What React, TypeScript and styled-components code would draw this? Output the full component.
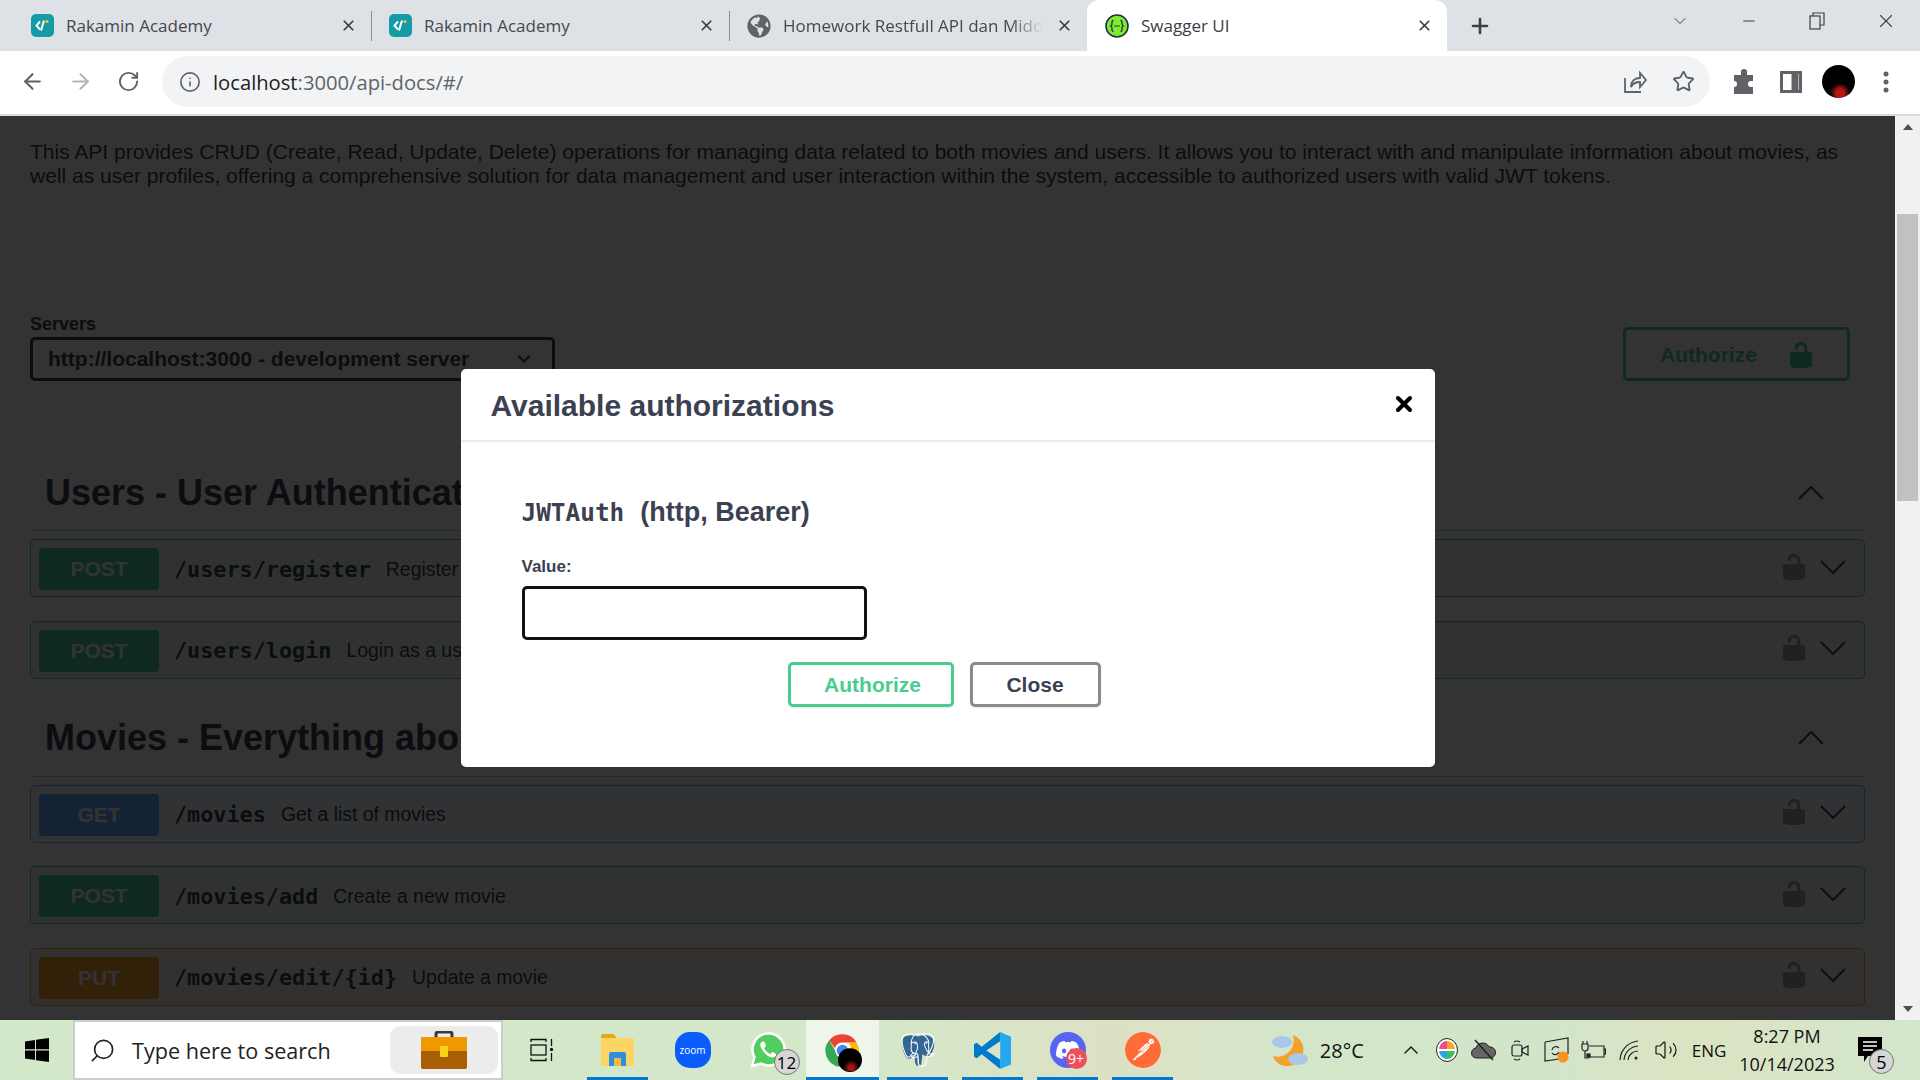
import styled, { createGlobalStyle } from "styled-components";
import { ArrowLeft, ArrowRight, RotateCw, Info, Star, X, Plus, ChevronDown, ChevronUp, Minus, Search, Volume2 } from "lucide-react";
import { FaGlobeAmericas, FaDiscord } from "react-icons/fa";
import { SiPostgresql, SiPostman } from "react-icons/si";

type Method = "post" | "get" | "put";

type Operation = {
  method: Method;
  path: string;
  summary: string;
};

const methodColors: Record<Method, { main: string; soft: string }> = {
  post: { main: "#49cc90", soft: "rgba(73,204,144,.1)" },
  get: { main: "#61affe", soft: "rgba(97,175,254,.1)" },
  put: { main: "#fca130", soft: "rgba(252,161,48,.1)" },
};

const userOps: Operation[] = [
  { method: "post", path: "/users/register", summary: "Register a new user" },
  { method: "post", path: "/users/login", summary: "Login as a user" },
];

const movieOps: Operation[] = [
  { method: "get", path: "/movies", summary: "Get a list of movies" },
  { method: "post", path: "/movies/add", summary: "Create a new movie" },
  { method: "put", path: "/movies/edit/{id}", summary: "Update a movie" },
];

const GlobalStyle = createGlobalStyle`
  html, body {
    margin: 0;
    height: 100%;
    overflow: hidden;
  }
  * {
    box-sizing: border-box;
  }
`;

const Screen = styled.div`
  width: 1920px;
  height: 1080px;
  display: flex;
  flex-direction: column;
  font-family: "Liberation Sans", Arial, sans-serif;
  background: #fff;
`;

/* browser chrome */
const TabStrip = styled.div`
  height: 51px;
  flex: none;
  display: flex;
  align-items: stretch;
  padding-left: 14px;
  background: #dee1e6;
  font-family: "Open Sans", "Noto Sans", sans-serif;
`;

const Tab = styled.div<{ $w: number; $active?: boolean }>`
  position: relative;
  width: ${({ $w }) => $w}px;
  display: flex;
  align-items: center;
  gap: 12px;
  padding: 0 13px 0 ${({ $active }) => ($active ? 18 : 17)}px;
  color: ${({ $active }) => ($active ? "#3c4043" : "#45484d")};
  background: ${({ $active }) => ($active ? "#fff" : "transparent")};
  border-radius: ${({ $active }) => ($active ? "12px 12px 0 0" : "0")};
`;

const TabTitle = styled.span<{ $fade?: boolean }>`
  flex: 1;
  min-width: 0;
  font-size: 17px;
  white-space: nowrap;
  overflow: hidden;
  mask-image: ${({ $fade }) => ($fade ? "linear-gradient(90deg, #000 88%, transparent 100%)" : "none")};
`;

const TabClose = styled.span`
  width: 20px;
  display: flex;
  justify-content: center;
  color: #3c4043;
`;

const TabDivider = styled.div`
  width: 1px;
  height: 30px;
  align-self: center;
  background: #888b90;
`;

const NewTab = styled.div`
  width: 44px;
  margin-left: 11px;
  display: flex;
  align-items: center;
  justify-content: center;
  color: #3c4043;
`;

const WindowControls = styled.div`
  margin-left: auto;
  display: flex;
`;

const WindowButton = styled.div`
  width: 68.5px;
  height: 42px;
  display: flex;
  align-items: center;
  justify-content: center;
  color: #3c4043;
`;

const Favicon = styled.span<{ $bg: string }>`
  width: 23px;
  height: 23px;
  flex: none;
  border-radius: 5px;
  background: ${({ $bg }) => $bg};
  display: flex;
  align-items: center;
  justify-content: center;
  color: #fff;
`;

const Toolbar = styled.div`
  height: 65px;
  flex: none;
  display: flex;
  align-items: center;
  padding: 0 10px 2px 8px;
  background: #fff;
  border-bottom: 2px solid #dcdcdc;
`;

const ToolButton = styled.div<{ $w?: number; $dim?: boolean }>`
  width: ${({ $w }) => $w ?? 48}px;
  flex: none;
  display: flex;
  align-items: center;
  justify-content: center;
  color: ${({ $dim }) => ($dim ? "#b3b5b8" : "#5f6368")};
`;

const Omnibox = styled.div`
  flex: 1;
  height: 51px;
  margin: 0 10px;
  padding: 0 3px 0 17px;
  display: flex;
  align-items: center;
  gap: 12px;
  border-radius: 26px;
  background: #f1f3f4;
`;

const OmniActions = styled.div`
  display: flex;
`;

const Url = styled.div`
  flex: 1;
  font-family: "Open Sans", "Noto Sans", sans-serif;
  font-size: 20.2px;
  color: #5f6368;
  b {
    font-weight: 400;
    color: #202124;
  }
`;

const Avatar = styled.div`
  width: 33px;
  height: 33px;
  border-radius: 50%;
  background: radial-gradient(circle at 55% 85%, #b01818 0 12%, #000 30%);
`;

/* swagger page */
const Viewport = styled.div`
  flex: 1;
  min-height: 0;
  display: flex;
`;

const Main = styled.div`
  position: relative;
  flex: 1;
  min-width: 0;
  overflow: hidden;
  background: #fff;
  color: #3b4151;
`;

const Intro = styled.p`
  margin: 0;
  height: 198px;
  padding: 24px 30px 0;
  font-size: 21px;
  line-height: 24px;
`;

const SchemeBar = styled.div`
  height: 113px;
  padding: 0 45px 45px 30px;
  display: flex;
  justify-content: space-between;
  align-items: flex-end;
  border-bottom: 1px solid #e8e8e8;
`;

const ServerLabel = styled.div`
  font-size: 18px;
  font-weight: 700;
  line-height: 20px;
  margin-bottom: 3px;
`;

const ServerSelect = styled.div`
  width: 525px;
  height: 44px;
  padding: 0 18px 0 15px;
  display: flex;
  align-items: center;
  justify-content: space-between;
  border: 3px solid #41444e;
  border-radius: 5px;
  font-size: 21px;
  font-weight: 700;
`;

const AuthorizeTop = styled.div`
  width: 227px;
  height: 54px;
  padding: 1px 0 0 34px;
  display: flex;
  align-items: center;
  gap: 33px;
  border: 3px solid #49cc90;
  border-radius: 5px;
  color: #49cc90;
  font-size: 21px;
  font-weight: 700;
`;

const Section = styled.section`
  padding: 0 30px;
`;

const SectionHead = styled.h3<{ $top: number }>`
  margin: ${({ $top }) => $top}px 0 0;
  height: 78px;
  padding: 2px 41px 0 15px;
  display: flex;
  align-items: center;
  justify-content: space-between;
  border-bottom: 1px solid rgba(59,65,81,.3);
  font-size: 36px;
  font-weight: 700;
  white-space: nowrap;
`;

const OperationList = styled.div`
  margin-top: 8px;
  display: flex;
  flex-direction: column;
  gap: 23.5px;
`;

const Row = styled.div<{ $method: Method }>`
  height: 58px;
  padding: 8px 18px 6px 8px;
  display: flex;
  align-items: center;
  border: 1px solid ${({ $method }) => methodColors[$method].main};
  border-radius: 5px;
  background: ${({ $method }) => methodColors[$method].soft};
`;

const Badge = styled.div<{ $method: Method }>`
  width: 120px;
  height: 42px;
  flex: none;
  display: flex;
  align-items: center;
  justify-content: center;
  border-radius: 4px;
  background: ${({ $method }) => methodColors[$method].main};
  color: #fff;
  font-size: 21px;
  font-weight: 700;
`;

const OpPath = styled.span`
  margin-left: 15px;
  font-family: "DejaVu Sans Mono", "Liberation Mono", monospace;
  font-size: 21.8px;
  font-weight: 700;
`;

const OpSummary = styled.span`
  margin-left: 15px;
  font-size: 19.4px;
`;

const RowEnd = styled.div`
  margin: 0 0 5px auto;
  display: flex;
  align-items: center;
  gap: 15px;
`;

const DimLock = styled.span`
  display: flex;
  opacity: .45;
`;

/* modal */
const Backdrop = styled.div`
  position: absolute;
  inset: 0;
  display: flex;
  align-items: center;
  justify-content: center;
  background: rgba(0,0,0,.8);
`;

const Modal = styled.div`
  width: 974px;
  height: 398px;
  background: #fff;
  border-radius: 5px;
  color: #3b4151;
`;

const ModalHeader = styled.div`
  height: 73px;
  padding: 2px 19px 0 30px;
  display: flex;
  align-items: center;
  justify-content: space-between;
  border-bottom: 2px solid #ebebed;
`;

const ModalTitle = styled.h3`
  margin: 0;
  font-size: 30px;
  font-weight: 700;
`;

const ModalClose = styled.span`
  display: flex;
  margin-bottom: 4px;
  color: #000;
`;

const ModalBody = styled.div`
  padding: 56px 60px 0 61px;
`;

const SchemeName = styled.h4`
  margin: 0;
  height: 28px;
  display: flex;
  align-items: center;
  gap: 16px;
  font-size: 27px;
  font-weight: 700;
  code {
    font-family: "DejaVu Sans Mono", "Liberation Mono", monospace;
    font-size: 24.4px;
  }
`;

const ValueLabel = styled.label`
  display: block;
  margin-top: 31px;
  font-size: 17px;
  font-weight: 700;
  line-height: 20px;
`;

const ValueInput = styled.input`
  display: block;
  width: 345px;
  height: 54px;
  margin-top: 9px;
  border: 3px solid #111;
  border-radius: 5px;
  background: #fff;
  outline: none;
`;

const Actions = styled.div`
  margin-top: 22px;
  padding-right: 8px;
  display: flex;
  justify-content: center;
  gap: 16px;
`;

const ModalButton = styled.button<{ $w: number; $color: string; $text: string; $shift?: number }>`
  width: ${({ $w }) => $w}px;
  height: 45px;
  padding: 0 0 0 ${({ $shift }) => $shift ?? 0}px;
  border: 3px solid ${({ $color }) => $color};
  border-radius: 5px;
  background: #fff;
  box-shadow: 0 1px 2px rgba(0,0,0,.1);
  color: ${({ $text }) => $text};
  font-family: inherit;
  font-size: 21px;
  font-weight: 700;
`;

/* scrollbar */
const ScrollBar = styled.div`
  width: 25px;
  flex: none;
  display: flex;
  flex-direction: column;
  align-items: center;
  background: #f1f1f1;
`;

const ScrollArrow = styled.div<{ $down?: boolean }>`
  height: 22px;
  flex: none;
  display: flex;
  align-items: center;
  justify-content: center;
  &::before {
    content: "";
    border-left: 5px solid transparent;
    border-right: 5px solid transparent;
    border-${({ $down }) => ($down ? "top" : "bottom")}: 6px solid #505050;
  }
`;

const ScrollTrack = styled.div`
  flex: 1;
  padding-top: 76px;
`;

const ScrollThumb = styled.div`
  width: 21px;
  height: 287px;
  background: #c1c1c1;
`;

/* taskbar */
const Taskbar = styled.div`
  height: 60px;
  flex: none;
  display: flex;
  align-items: stretch;
  padding-right: 20px;
  background: linear-gradient(90deg, #d3e8c9 0%, #d4e7c9 45%, #dde1c4 58%, #d3e6ca 68%, #d2e5c9 80%, #dbe4c2 88%, #d3e6cb 100%);
  color: #111;
  font-family: "Open Sans", "Noto Sans", sans-serif;
`;

const StartButton = styled.div`
  width: 73px;
  display: flex;
  align-items: center;
  justify-content: center;
`;

const SearchBox = styled.div`
  width: 430px;
  padding: 0 3px 0 14px;
  display: flex;
  align-items: center;
  border: 2px solid #cdcdcd;
  background: #fff;
  font-size: 21.6px;
  color: #222;
`;

const SearchGlyph = styled(Search)`
  transform: scaleX(-1);
`;

const SearchText = styled.span`
  margin-left: 16px;
  flex: 1;
`;

const SearchChip = styled.div`
  width: 108px;
  height: 48px;
  display: flex;
  align-items: center;
  justify-content: center;
  border-radius: 10px;
  background: #ececec;
`;

const TaskSlot = styled.div<{ $w?: number; $open?: boolean; $active?: boolean }>`
  position: relative;
  width: ${({ $w }) => $w ?? 75}px;
  display: flex;
  align-items: center;
  justify-content: center;
  &::before {
    content: "";
    display: ${({ $active }) => ($active ? "block" : "none")};
    position: absolute;
    inset: 0 1px;
    background: rgba(255,255,255,.6);
  }
  &::after {
    content: "";
    display: ${({ $open }) => ($open ? "block" : "none")};
    position: absolute;
    bottom: 0;
    left: ${({ $active }) => ($active ? 1 : 7)}px;
    right: ${({ $active }) => ($active ? 1 : 7)}px;
    height: 3px;
    background: #0078d4;
  }
  > * {
    position: relative;
  }
`;

const CountBadge = styled.span<{ $bg: string; $size: number; $font?: number; $right: number; $bottom: number; $dark?: boolean }>`
  position: absolute;
  right: ${({ $right }) => $right}px;
  bottom: ${({ $bottom }) => $bottom}px;
  width: ${({ $size }) => $size}px;
  height: ${({ $size }) => $size}px;
  display: flex;
  align-items: center;
  justify-content: center;
  border-radius: 50%;
  border: 1px solid ${({ $dark }) => ($dark ? "#777" : "transparent")};
  background: ${({ $bg }) => $bg};
  color: ${({ $dark }) => ($dark ? "#000" : "#fff")};
  font-size: ${({ $font }) => $font ?? 14}px;
  line-height: 1;
`;

const IconWrap = styled.div`
  position: relative;
  display: flex;
`;

const ElephantLines = styled.span`
  position: absolute;
  inset: 0;
  display: flex;
  align-items: center;
  justify-content: center;
  color: #fff;
`;

const ZoomIcon = styled.div`
  width: 36px;
  height: 36px;
  display: flex;
  align-items: center;
  justify-content: center;
  border-radius: 15px;
  background: #0b5cff;
  color: #fff;
  font-size: 10px;
`;

const RoundIcon = styled.div<{ $bg: string }>`
  width: 36px;
  height: 36px;
  display: flex;
  align-items: center;
  justify-content: center;
  border-radius: 50%;
  background: ${({ $bg }) => $bg};
  color: #fff;
`;

const Tray = styled.div`
  margin-left: auto;
  display: flex;
  align-items: center;
`;

const Temperature = styled.span`
  margin-left: 12px;
  margin-right: 29px;
  font-size: 20px;
`;

const TraySlot = styled.div<{ $w?: number }>`
  width: ${({ $w }) => $w ?? 36.4}px;
  display: flex;
  align-items: center;
  justify-content: center;
  font-size: 17px;
`;

const Clock = styled.div`
  width: 106px;
  text-align: center;
  font-size: 18px;
  line-height: 28px;
`;

const Notification = styled.div`
  position: relative;
  width: 60px;
  height: 60px;
  display: flex;
  align-items: center;
  justify-content: center;
`;

function RakaminIcon() {
  return (
    <Favicon $bg="#149ca6">
      <svg width="15" height="15" viewBox="0 0 15 15" fill="none">
        <path d="M5 3.5 1.5 7.5 5 11.5" stroke="#fff" strokeWidth="2" />
        <path d="M9 2.5 6 12.5" stroke="#fff" strokeWidth="2" />
        <circle cx="12" cy="3.5" r="1.6" fill="#f6c344" />
      </svg>
    </Favicon>
  );
}

function SwaggerIcon() {
  return (
    <svg width="24" height="24" viewBox="0 0 24 24">
      <circle cx="12" cy="12" r="11" fill="#85ea2d" stroke="#173647" strokeWidth="1.6" />
      <path d="M8.5 6.5c-2 0-1.500 2-1.500 3.500s-1.300 2-1.300 2 1.300.5 1.300 2-.5 3.500 1.500 3.500M15.500 6.500c2 0 1.500 2 1.500 3.500s1.300 2 1.300 2-1.300.5-1.300 2 .5 3.500-1.500 3.500" fill="none" stroke="#173647" strokeWidth="1.300" />
      <path d="M9.500 12h5" stroke="#173647" strokeWidth="1.500" strokeDasharray="1.300 .6" />
    </svg>
  );
}

function LockIcon({ w, h, color }: { w: number; h: number; color: string }) {
  return (
    <svg width={w} height={h} viewBox="3 1 14 18" preserveAspectRatio="none" fill={color}>
      <path d="M15.800 8H14V5.600C14 2.703 12.665 1 10 1 7.334 1 6 2.703 6 5.600V6h2v-.801C8 3.754 8.797 3 10 3c1.203 0 2 .754 2 2.199V8H4c-.553 0-1 .646-1 1.199V17c0 .549.428 1.139.951 1.307l1.197.387C5.672 18.861 6.550 19 7.100 19h5.800c.549 0 1.428-.139 1.951-.307l1.196-.387c.524-.167.953-.757.953-1.306V9.199C17 8.646 16.352 8 15.800 8z" />
    </svg>
  );
}

function Caret({ up }: { up?: boolean }) {
  return (
    <svg width="26" height="14" viewBox="0 0 26 14" fill="none" stroke="#3b4151" strokeWidth="2">
      <path d={up ? "M1 13 13 1 25 13" : "M1 1 13 13 25 1"} />
    </svg>
  );
}

function OperationRow({ op }: { op: Operation }) {
  return (
    <Row $method={op.method}>
      <Badge $method={op.method}>{op.method.toUpperCase()}</Badge>
      <OpPath>{op.path}</OpPath>
      <OpSummary>{op.summary}</OpSummary>
      <RowEnd>
        <DimLock><LockIcon w={22} h={26} color="#3b4151" /></DimLock>
        <Caret />
      </RowEnd>
    </Row>
  );
}

function ApiSection({ title, top, ops }: { title: string; top: number; ops: Operation[] }) {
  return (
    <Section>
      <SectionHead $top={top}>
        {title}
        <Caret up />
      </SectionHead>
      <OperationList>
        {ops.map((op) => (
          <OperationRow key={op.path} op={op} />
        ))}
      </OperationList>
    </Section>
  );
}

function WindowsLogo() {
  return (
    <svg width="24" height="24" viewBox="0 0 24 24" fill="#000">
      <path d="M0 3.400 10 2v9.300H0zM11 1.800 24 0v11.300H11zM0 12.500h10v9.400L0 20.500zM11 12.500h13V24l-13-1.800z" />
    </svg>
  );
}

function Briefcase() {
  return (
    <svg width="46" height="38" viewBox="0 0 46 38">
      <path d="M15 7V3a2 2 0 0 1 2-2h12a2 2 0 0 1 2 2v4" fill="none" stroke="#3a3a3a" strokeWidth="3" />
      <rect x="0" y="6" width="46" height="32" rx="2" fill="#a85e04" />
      <path d="M0 8a2 2 0 0 1 2-2h42a2 2 0 0 1 2 2v12H0z" fill="#f09800" />
      <rect x="19" y="15" width="8" height="11" rx="1" fill="#fcd116" />
    </svg>
  );
}

function TaskView() {
  return (
    <svg width="24" height="24" viewBox="0 0 24 24" fill="none" stroke="#111" strokeWidth="1.300">
      <path d="M1 4V1.500h15V4M1 20v2.500h15V20" />
      <rect x="1" y="7" width="15" height="10" />
      <path d="M21.500 1v7M21.500 15v8" />
      <circle cx="21.500" cy="11.500" r="1" fill="#111" />
    </svg>
  );
}

function FolderIcon() {
  return (
    <svg width="33" height="32" viewBox="0 0 33 32">
      <path d="M0 2a2 2 0 0 1 2-2h10l4 4h-16z" fill="#e6a817" />
      <rect x="0" y="4" width="33" height="28" rx="2" fill="#fcd462" />
      <path d="M8 32V20a2 2 0 0 1 2-2h13a2 2 0 0 1 2 2v12h-5v-8h-7v8z" fill="#2f8fd8" />
      <rect x="13" y="24" width="7" height="8" fill="#f4b93e" />
    </svg>
  );
}

function ChromeIcon() {
  return (
    <svg width="39" height="39" viewBox="0 0 48 48">
      <path d="M24 4a20 20 0 0 1 17.300 10H24a10 10 0 0 0-9.500 7L7.600 11.500A20 20 0 0 1 24 4z" fill="#ea4335" />
      <path d="M7.600 11.500 16 26a10 10 0 0 0 11 7.500L20 44A20 20 0 0 1 7.600 11.500z" fill="#34a853" />
      <path d="M41.300 14A20 20 0 0 1 20 44l8.500-13A10 10 0 0 0 31 14z" fill="#fbbc04" />
      <circle cx="24" cy="24" r="9" fill="#fff" />
      <circle cx="24" cy="24" r="7" fill="#4285f4" />
    </svg>
  );
}

function WhatsAppIcon() {
  return (
    <svg width="38" height="38" viewBox="0 0 38 38">
      <path d="M3 35 5.500 26A16 16 0 1 1 12 32.500z" fill="#4fce5d" stroke="#fff" strokeWidth="2.500" strokeLinejoin="round" />
      <path d="M13 10.500c-2 1.500-2.500 4 0 8s6 7 9.500 8c2.500.5 4.500-1 5-3 0-.5-3.500-2.500-4-2.500-.8 0-1.500 2-2.200 2-1.500-.3-5.500-3.800-6-5.800 0-.7 1.700-1.500 1.700-2.200 0-.5-1.500-4.500-2-4.500-.6-.2-1.300-.1-2 0z" fill="#fff" />
    </svg>
  );
}

function ElephantIcon() {
  return (
    <IconWrap>
      <svg width="34" height="36" viewBox="0 0 24 24">
        <path d="M5 2C1 2 0 6 1 10c1 5 3 9 5 8 2 0 3-2 3.500-3l.5 6c.5 3 4 3 4.500 0l.5-6c3 2 5 2 6 0 2.500-3 3-8 2-10-2-4-7-4-11-2.500C10 1.500 7 1.500 5 2z" fill="#336791" />
      </svg>
      <ElephantLines><SiPostgresql size={34} /></ElephantLines>
    </IconWrap>
  );
}

function VsCodeIcon() {
  return (
    <svg width="37" height="37" viewBox="0 0 24 24">
      <path d="M17 0 24 3v18l-7 3z" fill="#23a9f2" />
      <path d="M17 0v6L8 12l9 6v6L5 14.500 1.800 17 0 16v-8l1.800-1L5 9.500z" fill="#007acc" />
    </svg>
  );
}

function WeatherIcon() {
  return (
    <svg width="37" height="33" viewBox="0 0 37 33">
      <path d="M22 1a16 16 0 0 1-6 31C9 32 4 28 2 22c12 4 24-8 20-21z" fill="#f2a22c" />
      <ellipse cx="11" cy="8" rx="10" ry="6" fill="#a9c7e8" />
      <ellipse cx="27" cy="25" rx="10" ry="6" fill="#a9c7e8" />
    </svg>
  );
}

function ColorCircle() {
  return (
    <svg width="22" height="24" viewBox="0 0 22 24">
      <ellipse cx="11" cy="12" rx="10.500" ry="11.500" fill="#fff" stroke="#222" />
      <path d="M11 3a8 9 0 0 0-8 8h8z" fill="#ee4d8c" />
      <path d="M11 3a8 9 0 0 1 8 8h-8z" fill="#f7a823" />
      <path d="M3 13a8 9 0 0 0 8 8v-8z" fill="#2aa7e1" />
      <path d="M19 13a8 9 0 0 1-8 8v-8z" fill="#39c15b" />
    </svg>
  );
}

function CloudOff() {
  return (
    <svg width="26" height="22" viewBox="0 0 26 22">
      <path d="M6 19a5 5 0 0 1-1-10 7 7 0 0 1 13-1 5.500 5.500 0 0 1 2 11z" fill="#666" stroke="#222" />
      <path d="M4 1 22 21" stroke="#222" strokeWidth="1.500" />
    </svg>
  );
}

function MeetIcon() {
  return (
    <svg width="18" height="26" viewBox="0 0 18 26" fill="none" stroke="#222" strokeWidth="1.200">
      <rect x="1" y="8" width="10" height="11" rx="2" />
      <path d="m11 12 6-3v9l-6-3zM3 5q3-2 6 0M3 22q3 2 6 0" />
    </svg>
  );
}

function SyncIcon() {
  return (
    <svg width="25" height="26" viewBox="0 0 25 26" fill="none" stroke="#222" strokeWidth="1.200">
      <path d="M1 5 24 1v16M1 5v19l14-2" />
      <path d="M8 13a4 4 0 0 1 7-2M15 15a4 4 0 0 1-7 1" />
      <circle cx="19" cy="20" r="5.500" fill="#f7931e" stroke="none" />
    </svg>
  );
}

function BatteryIcon() {
  return (
    <svg width="25" height="20" viewBox="0 0 25 20" fill="none" stroke="#222" strokeWidth="1.200">
      <path d="M8 6h15v11H8M23 9h1.500v5H23" />
      <path d="M2 4v-3M6 4v-3M1 4h6v4a3 3 0 0 1-6 0zM4 11v7h4" />
      <rect x="6" y="14" width="3" height="3" fill="#222" />
    </svg>
  );
}

function WifiIcon() {
  return (
    <svg width="20" height="22" viewBox="0 0 20 22" fill="none" stroke="#222" strokeWidth="1.200">
      <path d="M1 21A20 20 0 0 1 19 2M5 21A15 15 0 0 1 19 7M9 21a10 10 0 0 1 10-9" />
      <circle cx="17" cy="19" r="1.500" fill="#222" stroke="none" />
    </svg>
  );
}

export default function App() {
  return (
    <Screen>
      <GlobalStyle />
      <TabStrip>
        <Tab $w={357}>
          <RakaminIcon />
          <TabTitle>Rakamin Academy</TabTitle>
          <TabClose><X size={17} strokeWidth={2.4} /></TabClose>
        </Tab>
        <TabDivider />
        <Tab $w={357}>
          <RakaminIcon />
          <TabTitle>Rakamin Academy</TabTitle>
          <TabClose><X size={17} strokeWidth={2.4} /></TabClose>
        </Tab>
        <TabDivider />
        <Tab $w={357}>
          <FaGlobeAmericas size={24} color="#5f6368" />
          <TabTitle $fade>Homework Restfull API dan Middleware</TabTitle>
          <TabClose><X size={17} strokeWidth={2.4} /></TabClose>
        </Tab>
        <Tab $w={360} $active>
          <SwaggerIcon />
          <TabTitle>Swagger UI</TabTitle>
          <TabClose><X size={17} strokeWidth={2.4} /></TabClose>
        </Tab>
        <NewTab><Plus size={24} strokeWidth={2.6} /></NewTab>
        <WindowControls>
          <WindowButton><ChevronDown size={20} strokeWidth={1.2} /></WindowButton>
          <WindowButton><Minus size={18} strokeWidth={1.4} /></WindowButton>
          <WindowButton>
            <svg width="16" height="18" viewBox="0 0 16 18" fill="none" stroke="#3c4043" strokeWidth="1.200">
              <rect x="1" y="4" width="10" height="13" />
              <path d="M4 4V1h11v12h-4" />
            </svg>
          </WindowButton>
          <WindowButton><X size={22} strokeWidth={1.2} /></WindowButton>
        </WindowControls>
      </TabStrip>

      <Toolbar>
        <ToolButton><ArrowLeft size={25} strokeWidth={2} /></ToolButton>
        <ToolButton $dim><ArrowRight size={25} strokeWidth={2} /></ToolButton>
        <ToolButton><RotateCw size={23} strokeWidth={2} /></ToolButton>
        <Omnibox>
          <Info size={22} color="#5f6368" strokeWidth={1.8} />
          <Url><b>localhost</b>:3000/api-docs/#/</Url>
          <OmniActions>
            <ToolButton>
              <svg width="24" height="24" viewBox="0 0 24 24" fill="none" stroke="#5f6368" strokeWidth="1.800">
                <path d="M2 8v14h16M8 17c0-6 4-9 9-9V3l6 7-6 7v-5c-4 0-7 1-9 5z" />
              </svg>
            </ToolButton>
            <ToolButton><Star size={23} strokeWidth={2} /></ToolButton>
          </OmniActions>
        </Omnibox>
        <ToolButton $w={47.5}>
          <svg width="24" height="26" viewBox="0 0 24 26" fill="#5f6368">
            <path d="M9 3a3 3 0 0 1 6 0v3h6v6h-2a3 3 0 0 0 0 6h2v7H2v-7a3 3 0 0 0 0-6V6h7z" />
          </svg>
        </ToolButton>
        <ToolButton $w={47.5}>
          <svg width="22" height="22" viewBox="0 0 22 22" fill="none" stroke="#5f6368" strokeWidth="3">
            <rect x="1.500" y="1.500" width="19" height="19" />
            <path d="M15 1v20" strokeWidth="7" />
          </svg>
        </ToolButton>
        <ToolButton $w={47.5}><Avatar /></ToolButton>
        <ToolButton $w={47.5}>
          <svg width="6" height="22" viewBox="0 0 6 22" fill="#5f6368">
            <circle cx="3" cy="3" r="2.500" />
            <circle cx="3" cy="11" r="2.500" />
            <circle cx="3" cy="19" r="2.500" />
          </svg>
        </ToolButton>
      </Toolbar>

      <Viewport>
        <Main>
          <Intro>
            This API provides CRUD (Create, Read, Update, Delete) operations for managing data related to both movies and users. It allows you to interact with and manipulate information about movies, as well as user profiles, offering a comprehensive solution for data management and user interaction within the system, accessible to authorized users with valid JWT tokens.
          </Intro>
          <SchemeBar>
            <div>
              <ServerLabel>Servers</ServerLabel>
              <ServerSelect>
                http://localhost:3000 - development server
                <ChevronDown size={20} strokeWidth={2.6} />
              </ServerSelect>
            </div>
            <AuthorizeTop>
              Authorize
              <LockIcon w={22} h={26} color="#49cc90" />
            </AuthorizeTop>
          </SchemeBar>
          <ApiSection title="Users - User Authentication" top={26} ops={userOps} />
          <ApiSection title="Movies - Everything about movies" top={20} ops={movieOps} />

          <Backdrop>
            <Modal>
              <ModalHeader>
                <ModalTitle>Available authorizations</ModalTitle>
                <ModalClose><X size={24} strokeWidth={4} /></ModalClose>
              </ModalHeader>
              <ModalBody>
                <SchemeName><code>JWTAuth</code> (http, Bearer)</SchemeName>
                <ValueLabel>Value:</ValueLabel>
                <ValueInput type="text" />
                <Actions>
                  <ModalButton $w={166} $color="#49cc90" $text="#49cc90" $shift={4}>Authorize</ModalButton>
                  <ModalButton $w={131} $color="#8a8a8e" $text="#3b4151">Close</ModalButton>
                </Actions>
              </ModalBody>
            </Modal>
          </Backdrop>
        </Main>
        <ScrollBar>
          <ScrollArrow />
          <ScrollTrack><ScrollThumb /></ScrollTrack>
          <ScrollArrow $down />
        </ScrollBar>
      </Viewport>

      <Taskbar>
        <StartButton><WindowsLogo /></StartButton>
        <SearchBox>
          <SearchGlyph size={27} strokeWidth={1.5} />
          <SearchText>Type here to search</SearchText>
          <SearchChip><Briefcase /></SearchChip>
        </SearchBox>
        <TaskSlot $w={77}><TaskView /></TaskSlot>
        <TaskSlot $open><FolderIcon /></TaskSlot>
        <TaskSlot><ZoomIcon>zoom</ZoomIcon></TaskSlot>
        <TaskSlot>
          <IconWrap>
            <WhatsAppIcon />
            <CountBadge $bg="#d6d6d6" $dark $size={26} $font={17} $right={-13} $bottom={-6}>12</CountBadge>
          </IconWrap>
        </TaskSlot>
        <TaskSlot $open $active>
          <IconWrap>
            <ChromeIcon />
            <CountBadge $bg="radial-gradient(circle at 55% 85%, #a01616 0 12%, #000 34%)" $size={24} $right={0} $bottom={-2} />
          </IconWrap>
        </TaskSlot>
        <TaskSlot $open><ElephantIcon /></TaskSlot>
        <TaskSlot $open><VsCodeIcon /></TaskSlot>
        <TaskSlot $open>
          <IconWrap>
            <RoundIcon $bg="#5865f2"><FaDiscord size={26} /></RoundIcon>
            <CountBadge $bg="#ed4f5c" $size={21} $font={14} $right={-1} $bottom={-1}>9+</CountBadge>
          </IconWrap>
        </TaskSlot>
        <TaskSlot $open><RoundIcon $bg="#fff"><SiPostman size={36} color="#ff6c37" /></RoundIcon></TaskSlot>

        <Tray>
          <WeatherIcon />
          <Temperature>28°C</Temperature>
          <TraySlot><ChevronUp size={24} strokeWidth={1.4} /></TraySlot>
          <TraySlot><ColorCircle /></TraySlot>
          <TraySlot><CloudOff /></TraySlot>
          <TraySlot><MeetIcon /></TraySlot>
          <TraySlot><SyncIcon /></TraySlot>
          <TraySlot><BatteryIcon /></TraySlot>
          <TraySlot><WifiIcon /></TraySlot>
          <TraySlot><Volume2 size={24} strokeWidth={1.2} /></TraySlot>
          <TraySlot $w={50}>ENG</TraySlot>
          <Clock>8:27 PM<br />10/14/2023</Clock>
          <Notification>
            <svg width="24" height="26" viewBox="0 0 24 26" fill="#000">
              <path d="M0 0h24v19H10l-4 6v-6H0z" />
              <path d="M5 5h14M5 9h14M5 13h10" stroke="#fff" strokeWidth="1.500" />
            </svg>
            <CountBadge $bg="#d6d6d6" $dark $size={25} $font={18} $right={6} $bottom={6}>5</CountBadge>
          </Notification>
        </Tray>
      </Taskbar>
    </Screen>
  );
}
